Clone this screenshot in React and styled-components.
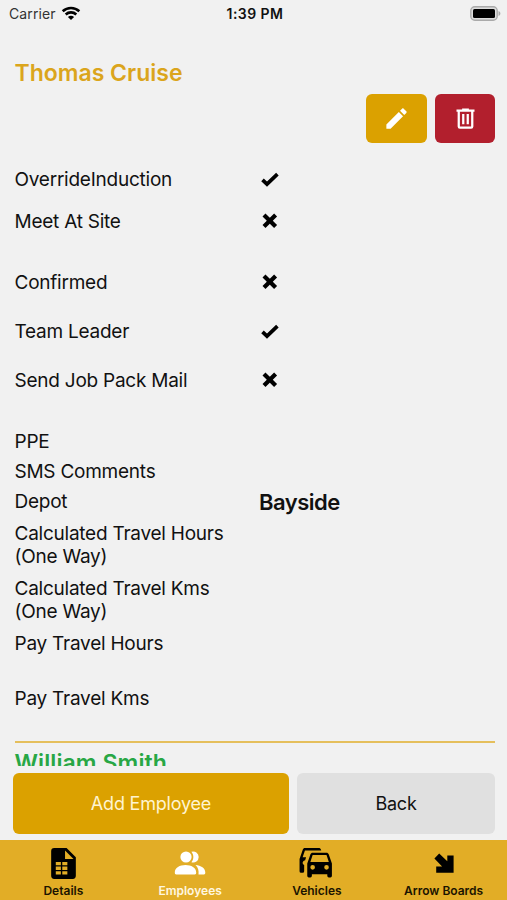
import React from "react";
import styled, { createGlobalStyle } from "styled-components";

const GlobalStyle = createGlobalStyle`
  :root {
    --gold: #dba100;
    --tab-gold: #e2ad26;
    --red: #b21f2d;
    --green: #28a745;
    --page: #f1f1f1;
  }

  * {
    box-sizing: border-box;
  }

  body {
    margin: 0;
    background-color: var(--page);
    font-family: Inter, "Liberation Sans", sans-serif;
    color: #111;
  }

  button {
    font-family: inherit;
  }
`;

const EMPLOYEE_FIELDS = [
  { label: "OverrideInduction", checked: true, height: 42 },
  { label: "Meet At Site", checked: false, height: 61 },
  { label: "Confirmed", checked: false, height: 49 },
  { label: "Team Leader", checked: true, height: 49 },
  { label: "Send Job Pack Mail", checked: false, height: 61 },
  { label: "PPE", height: 30 },
  { label: "SMS Comments", height: 30 },
  { label: "Depot", value: "Bayside", height: 32 },
  { label: "Calculated Travel Hours (One Way)", height: 55 },
  { label: "Calculated Travel Kms (One Way)", height: 55 },
  { label: "Pay Travel Hours", height: 55 },
  { label: "Pay Travel Kms", height: 54 },
];

const Icon = ({ size = 24, children }) => (
  <svg width={size} height={size} viewBox="0 0 24 24" fill="currentColor">
    {children}
  </svg>
);

const CheckIcon = () => (
  <svg width={20} height={20} viewBox="0 0 20 20" fill="none" stroke="#000">
    <path d="M3.5 9.9 8 14.2 18.400 4.200" strokeWidth="3.700" />
  </svg>
);

const CrossIcon = () => (
  <svg width={20} height={20} viewBox="0 0 20 20" fill="none" stroke="#000">
    <path d="M5 3 16.600 14.600M16.600 3 5 14.600" strokeWidth="4.200" />
  </svg>
);

const PencilIcon = () => (
  <Icon size={27}>
    <path d="M20.71 7.04c.39-.39.39-1.04 0-1.41l-2.34-2.34c-.37-.39-1.02-.39-1.41 0l-1.84 1.83 3.75 3.75M3 17.25V21h3.75L17.81 9.93l-3.75-3.75L3 17.25Z" />
  </Icon>
);

const TrashIcon = () => (
  <Icon size={27}>
    <path d="M9 3v1H4v2h1v13a2 2 0 0 0 2 2h10a2 2 0 0 0 2-2V6h1V4h-5V3H9M7 6h10v13H7V6m2 2v9h2V8H9m4 0v9h2V8h-2Z" />
  </Icon>
);

const DetailsIcon = () => (
  <Icon size={37}>
    <path
      fillRule="evenodd"
      d="M14 2H6a2 2 0 0 0-2 2v16a2 2 0 0 0 2 2h12a2 2 0 0 0 2-2V8l-6-6M13 9V3.5L18.5 9H13M7 11h3.300v2.200H7V11m4.200 0h3.300v2.200h-3.300V11M7 14h3.300v2.200H7V14m4.200 0h3.300v2.200h-3.300V14M7 17h3.300v2.200H7V17m4.200 0h3.300v2.200h-3.300V17Z"
    />
  </Icon>
);

const EmployeesIcon = () => (
  <svg width={32} height={24} viewBox="0 0 32 24" fill="currentColor">
    <circle cx="12" cy="6" r="5.600" />
    <path d="M17.400.8a5.500 5.500 0 1 1 0 10.400c2.600-3.100 2.600-7.300 0-10.400Z" />
    <path d="M.8 21.500c0-4.800 5-7.500 10.700-7.500s10.700 2.700 10.700 7.500c0 1.300-.3 1.900-1.500 1.900H2.300c-1.200 0-1.500-.6-1.500-1.900Z" />
    <path d="M21.500 14.100c5.500.5 9.800 3.200 9.800 7.400 0 1.300-.3 1.900-1.500 1.900h-5.300c.4-3.900-.3-6.800-3-9.300Z" />
  </svg>
);

const VehiclesIcon = () => (
  <Icon size={37}>
    <path d="M8 11L9.5 6.500H18.500L20 11M18.500 16A1.500 1.500 0 0 1 17 14.500A1.500 1.500 0 0 1 18.500 13A1.500 1.500 0 0 1 20 14.500A1.500 1.500 0 0 1 18.500 16M9.500 16A1.500 1.500 0 0 1 8 14.500A1.500 1.500 0 0 1 9.500 13A1.500 1.500 0 0 1 11 14.500A1.500 1.500 0 0 1 9.500 16M19.920 6C19.710 5.400 19.140 5 18.500 5H9.500C8.860 5 8.290 5.400 8.080 6L6 12V20A1 1 0 0 0 7 21H8A1 1 0 0 0 9 20V19H19V20A1 1 0 0 0 20 21H21A1 1 0 0 0 22 20V12L19.920 6M14.920 3C14.710 2.400 14.140 2 13.500 2H4.500C3.860 2 3.290 2.400 3.080 3L1 9V17A1 1 0 0 0 2 18H3A1 1 0 0 0 4 17V12.910C3.220 12.630 2.820 11.770 3.100 11C3.320 10.400 3.870 10 4.500 10H4.570L5.270 8H3L4.500 3.500H15.090L14.920 3Z" />
  </Icon>
);

const ArrowIcon = () => (
  <svg width={20} height={20} viewBox="0 0 20 20" fill="currentColor">
    <path d="M5.200.6 13.300 8.300V2.500h6.300v17.300H2.200v-6.200h5.900L.4 5.400Z" />
  </svg>
);

const WifiIcon = () => (
  <svg width={20} height={15} viewBox="0 0 20 15" fill="none" stroke="#000">
    <path d="M1.700 5.300c4.700-4.400 11.900-4.400 16.600 0M4.700 8.500c3-2.800 7.600-2.800 10.600 0" strokeWidth="2.600" />
    <path d="M10 14 6.900 10.900c1.700-1.600 4.500-1.600 6.200 0Z" fill="#000" stroke="none" />
  </svg>
);

const BatteryIcon = () => (
  <svg width={31} height={15} viewBox="0 0 31 15">
    <rect x=".8" y=".8" width="26.400" height="13.400" rx="4" fill="#ddd" stroke="#aaa" strokeWidth="1.400" />
    <rect x="3" y="3" width="22" height="9" rx="1.500" />
    <path d="M28.500 5c2.500 1 2.500 4 0 5Z" fill="#aaa" />
  </svg>
);

const TABS = [
  { label: "Details", icon: <DetailsIcon /> },
  { label: "Employees", icon: <EmployeesIcon />, active: true },
  { label: "Vehicles", icon: <VehiclesIcon /> },
  { label: "Arrow Boards", icon: <ArrowIcon /> },
];

const StatusBar = () => (
  <StyledStatusBar>
    <Carrier>
      Carrier
      <WifiIcon />
    </Carrier>
    <Clock>1:39 PM</Clock>
    <BatterySlot>
      <BatteryIcon />
    </BatterySlot>
  </StyledStatusBar>
);

const Field = ({ label, value, checked, height }) => (
  <FieldRow $height={height}>
    <FieldLabel>{label}</FieldLabel>
    {checked !== undefined && (
      <FieldMark>{checked ? <CheckIcon /> : <CrossIcon />}</FieldMark>
    )}
    {value && <FieldValue>{value}</FieldValue>}
  </FieldRow>
);

const App = () => (
  <>
    <GlobalStyle />
    <Screen>
      <StatusBar />
      <Content>
        <EmployeeName>
          <span>Thomas Cruise</span>
        </EmployeeName>
        <CardActions>
          <IconButton $color="var(--gold)" $width={61} aria-label="Edit">
            <PencilIcon />
          </IconButton>
          <IconButton $color="var(--red)" $width={60} aria-label="Delete">
            <TrashIcon />
          </IconButton>
        </CardActions>
        <FieldList>
          {EMPLOYEE_FIELDS.map((field) => (
            <Field key={field.label} {...field} />
          ))}
        </FieldList>
        <Divider />
        <EmployeeName $next>
          <span>William Smith</span>
        </EmployeeName>
      </Content>
      <Footer>
        <FooterButton $primary>
          <span>Add Employee</span>
        </FooterButton>
        <FooterButton>
          <span>Back</span>
        </FooterButton>
      </Footer>
      <TabBar>
        {TABS.map((tab) => (
          <Tab key={tab.label} $active={tab.active}>
            <TabIcon>{tab.icon}</TabIcon>
            <span>{tab.label}</span>
          </Tab>
        ))}
      </TabBar>
    </Screen>
  </>
);

export default App;

const Screen = styled.div`
  width: 507px;
  height: 900px;
  display: flex;
  flex-direction: column;
  overflow: hidden;
  background-color: var(--page);
`;

const StyledStatusBar = styled.header`
  flex: none;
  height: 27px;
  padding: 0 6px 0 9px;
  display: grid;
  grid-template-columns: 1fr auto 1fr;
  align-items: center;
  font-size: 14px;
`;

const Carrier = styled.div`
  display: flex;
  align-items: center;
  gap: 5px;
  letter-spacing: 0.1px;
  color: #333;
`;

const Clock = styled.div`
  font-size: 14px;
  font-weight: 600;
  letter-spacing: 0.45px;
`;

const BatterySlot = styled.div`
  display: flex;
  justify-content: flex-end;
`;

const Content = styled.main`
  flex: none;
  height: 739px;
  padding: 31px 12px 0 14.5px;
  overflow: hidden;
`;

const EmployeeName = styled.h1`
  margin: 0;
  font-size: 23px;
  line-height: 30px;
  font-weight: 600;
  letter-spacing: ${({ $next }) => ($next ? "0.1px" : "0")};
  color: ${({ $next }) => ($next ? "var(--green)" : "#dba51c")};
  padding-top: ${({ $next }) => ($next ? "5px" : "0")};
`;

const CardActions = styled.div`
  display: flex;
  justify-content: flex-end;
  gap: 8px;
  margin-top: 6px;
`;

const IconButton = styled.button`
  width: ${({ $width }) => $width}px;
  height: 49px;
  padding: 0;
  border: none;
  border-radius: 6px;
  display: flex;
  justify-content: center;
  align-items: center;
  color: #fff;
  background-color: ${({ $color }) => $color};
`;

const FieldList = styled.div`
  margin-top: 25px;
`;

const FieldRow = styled.div`
  display: grid;
  grid-template-columns: 244.5px 1fr;
  align-items: start;
  height: ${({ $height }) => $height}px;
`;

const FieldLabel = styled.div`
  max-width: 222px;
  font-size: 19px;
  line-height: 23px;
  letter-spacing: -0.24px;
`;

const FieldMark = styled.div`
  height: 23px;
  display: flex;
  align-items: center;
`;

const FieldValue = styled.div`
  font-size: 22px;
  line-height: 24px;
  font-weight: 600;
  letter-spacing: -0.5px;
`;

const Divider = styled.div`
  height: 2px;
  background-color: #e5bf5c;
`;

const Footer = styled.div`
  flex: none;
  height: 74px;
  padding: 7px 12px 6px 13px;
  display: grid;
  grid-template-columns: 276px 1fr;
  gap: 8px;
`;

const FooterButton = styled.button`
  padding: 0;
  border: none;
  border-radius: 6px;
  font-size: 18px;
  letter-spacing: -0.2px;
  color: ${({ $primary }) => ($primary ? "#fff4d0" : "#111")};
  background-color: ${({ $primary }) => ($primary ? "var(--gold)" : "#e0e0e0")};
`;

const TabBar = styled.nav`
  flex: none;
  height: 60px;
  display: grid;
  grid-template-columns: repeat(4, 1fr);
  background-color: var(--tab-gold);
`;

const Tab = styled.div`
  display: flex;
  flex-direction: column;
  align-items: center;
  font-size: 12px;
  line-height: 14px;
  font-weight: 600;
  color: ${({ $active }) => ($active ? "#fff7e0" : "#1b1400")};

  svg {
    color: ${({ $active }) => ($active ? "#fff" : "#000")};
  }
`;

const TabIcon = styled.div`
  height: 44px;
  padding-top: 2px;
  display: flex;
  align-items: center;
`;
